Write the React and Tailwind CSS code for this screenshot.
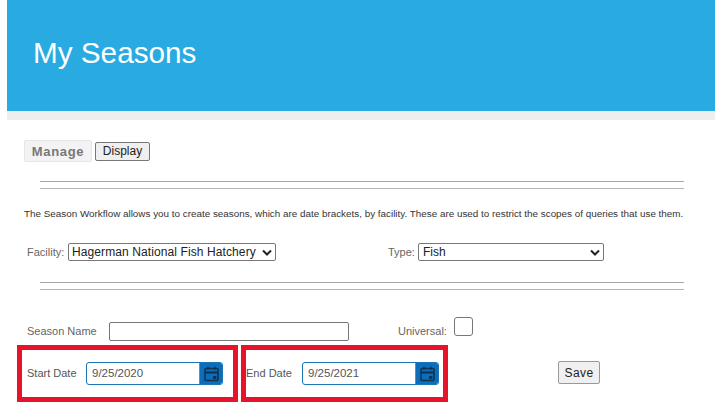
import React from "react";

const font = { fontFamily: '"Liberation Sans", Arial, sans-serif' };

function Cal() {
  return (
    <svg width="15" height="16" viewBox="0 0 15 16" fill="none" stroke="#10304c" strokeWidth="1.5">
      <rect x="1" y="2.5" width="13" height="12" rx="1" />
      <path d="M1 6.5h13" strokeWidth="2" />
      <path d="M4 0.8v3M11 0.8v3" />
      <rect x="9" y="10" width="3.4" height="3" fill="#10304c" stroke="none" />
    </svg>
  );
}

function DateField({ value }) {
  return (
    <div className="flex h-[23px] w-[137px] rounded-[3px] border border-[#1b76b8] bg-white overflow-hidden">
      <div className="flex-1 pl-[5px] text-[11.5px] leading-[20px] text-[#555]">{value}</div>
      <div className="w-[23px] bg-[#0a6ebd] border-l border-[#5fa35f] flex items-center justify-center">
        <Cal />
      </div>
    </div>
  );
}

function Rule({ mt }) {
  return (
    <div className={`${mt} ml-[33px] mr-[31px] flex flex-col gap-[6px]`}>
      <div className="h-px bg-[#a8a8a8]" />
      <div className="h-px bg-[#b4b4b4]" />
    </div>
  );
}

export default function App() {
  return (
    <div className="w-[715px] h-[411px] overflow-hidden bg-white pl-[7px]" style={font}>
      <div className="h-[111px] bg-[#29abe2] pl-[26px] pt-[35px]">
        <h1 className="text-[29.7px] leading-[36px] text-white">My Seasons</h1>
      </div>
      <div className="h-[9px] bg-[#eeeeee]" />

      <div className="mt-[20px] ml-[17px] flex items-center gap-[3px]">
        <div className="w-[68px] h-[22px] rounded-[2px] border border-[#e6e6e6] bg-[#f3f3f3] text-center text-[13px] leading-[21px] font-bold tracking-[0.7px] text-[#777]">
          Manage
        </div>
        <button className="mt-[1px] w-[55px] h-[19px] rounded-[2px] border border-[#777] bg-[#efefef] text-[12px] leading-[17px] text-[#222]">
          Display
        </button>
      </div>

      <Rule mt="mt-[19px]" />

      <p className="mt-[19px] ml-[17px] whitespace-nowrap text-[9.87px] leading-[12px] text-[#333]">
        The Season Workflow allows you to create seasons, which are date brackets, by facility. These are used to restrict the scopes of queries that use them.
      </p>

      <div className="mt-[23px] ml-[20px] flex items-center h-[18px]">
        <span className="text-[11px] text-[#666] w-[41px]">Facility:</span>
        <div className="w-[208px] h-[18px] rounded-[2px] border border-[#777] pl-[3px] flex items-center justify-between pr-[3px] text-[12px] tracking-[0.1px] text-[#222]">
          <span>Hagerman National Fish Hatchery</span>
          <svg width="10" height="7" viewBox="0 0 10 7" fill="none" stroke="#222" strokeWidth="2"><path d="M1 1.5l4 4 4-4" /></svg>
        </div>
        <span className="ml-[112px] text-[11px] text-[#666] w-[30px]">Type:</span>
        <div className="w-[186px] h-[18px] rounded-[2px] border border-[#777] pl-[4px] pr-[3px] flex items-center justify-between text-[12px] text-[#222]">
          <span>Fish</span>
          <svg width="10" height="7" viewBox="0 0 10 7" fill="none" stroke="#222" strokeWidth="2"><path d="M1 1.5l4 4 4-4" /></svg>
        </div>
      </div>

      <Rule mt="mt-[21px]" />

      <div className="mt-[27px] ml-[20px] flex items-start h-[24px]">
        <span className="mt-[8px] text-[11px] leading-[13px] text-[#666] w-[82px]">Season Name</span>
        <div className="mt-[5px] w-[240px] h-[19px] rounded-[2px] border border-[#777] bg-white" />
        <span className="mt-[8px] ml-[49px] text-[11px] leading-[13px] text-[#666] w-[56px]">Universal:</span>
        <div className="w-[19px] h-[19px] rounded-[3px] border border-[#777] bg-white" />
      </div>

      <div className="mt-[4px] ml-[10px] flex items-center">
        <div className="w-[221px] h-[57px] border-[5px] border-[#e8132a] pl-[5px] flex items-center">
          <span className="text-[11px] text-[#555] w-[59px]">Start Date</span>
          <DateField value="9/25/2020" />
        </div>
        <div className="ml-[3px] w-[207px] h-[57px] border-[5px] border-[#e8132a] flex items-center">
          <span className="text-[11px] text-[#555] w-[56px]">End Date</span>
          <DateField value="9/25/2021" />
        </div>
        <button className="ml-[110px] mb-[2px] w-[42px] h-[23px] rounded-[2px] border border-[#999] bg-[#f0f0f0] text-[12px] tracking-[0.4px] text-[#222]">
          Save
        </button>
      </div>
    </div>
  );
}
